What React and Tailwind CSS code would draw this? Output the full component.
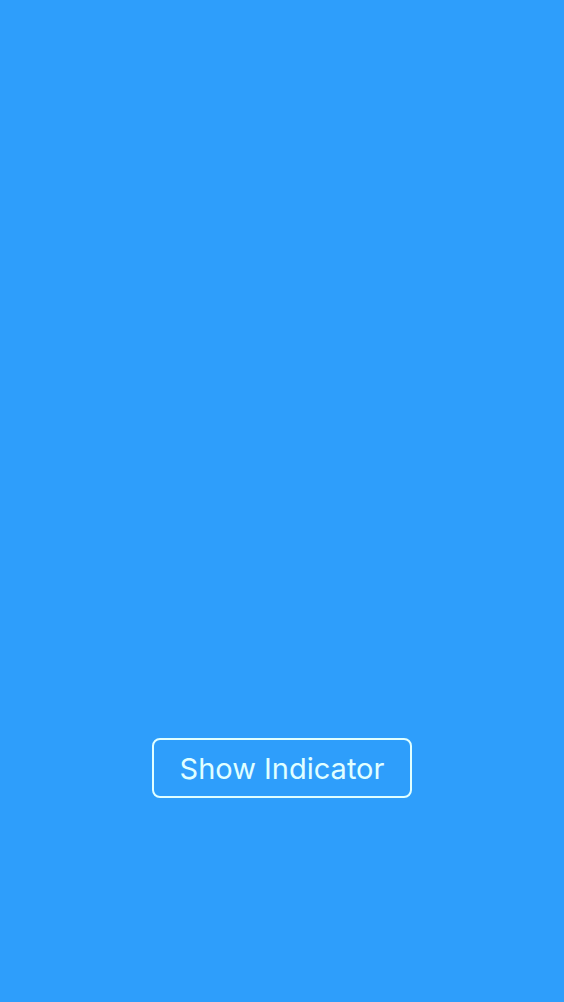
export default function App() {
  return (
    <main className="flex min-h-screen flex-col items-center justify-end bg-[#2e9efb] px-6 pb-51 font-['Inter',sans-serif]">
      <button
        type="button"
        className="h-15 min-w-65 cursor-pointer rounded-lg border-2 border-[#e0ffff] px-6 pt-0.5 text-[29px] leading-9 font-normal text-[#e0ffff]"
      >
        Show Indicator
      </button>
    </main>
  );
}
